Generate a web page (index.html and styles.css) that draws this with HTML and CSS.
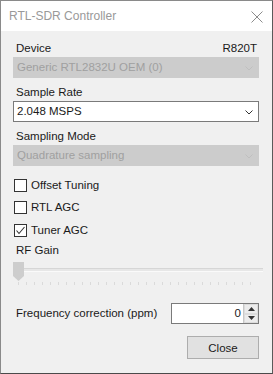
FILE: index.html
```html
<!DOCTYPE html>
<html lang="en">
<head>
    <meta charset="UTF-8">
    <title>RTL-SDR Controller</title>
    <link rel="stylesheet" href="styles.css">
</head>
<body>
    <div class="window">
        <div class="titlebar">
            <span class="title">RTL-SDR Controller</span>
            <svg class="close-x" width="12" height="12" viewBox="0 0 12 12">
                <path d="M0.5 0.5 L11.5 11.5 M11.5 0.5 L0.5 11.5" stroke="#8c8c8c" stroke-width="1" fill="none"/>
            </svg>
        </div>

        <div class="client">
            <div class="label-row first">
                <span>Device</span>
                <span>R820T</span>
            </div>
            <div class="combo disabled">
                <span>Generic RTL2832U OEM (0)</span>
                <svg class="arrow" width="8" height="5" viewBox="0 0 8 5"><path d="M0.5 0.5 L4 4 L7.5 0.5" stroke="#bfbfbf" fill="none"/></svg>
            </div>

            <div class="label-row">
                <span>Sample Rate</span>
            </div>
            <div class="combo">
                <span>2.048 MSPS</span>
                <svg class="arrow" width="8" height="5" viewBox="0 0 8 5"><path d="M0.5 0.5 L4 4 L7.5 0.5" stroke="#333" fill="none"/></svg>
            </div>

            <div class="label-row">
                <span>Sampling Mode</span>
            </div>
            <div class="combo disabled">
                <span>Quadrature sampling</span>
                <svg class="arrow" width="8" height="5" viewBox="0 0 8 5"><path d="M0.5 0.5 L4 4 L7.5 0.5" stroke="#bfbfbf" fill="none"/></svg>
            </div>

            <div class="checks">
                <div class="check"><span class="box"></span>Offset Tuning</div>
                <div class="check"><span class="box"></span>RTL AGC</div>
                <div class="check last">
                    <span class="box">
                        <svg width="11" height="11" viewBox="0 0 11 11"><path d="M1.5 5.5 L4 8.5 L9.5 2" stroke="#333" stroke-width="1.1" fill="none"/></svg>
                    </span>Tuner AGC
                </div>
            </div>

            <div class="label-row gain-label">
                <span>RF Gain</span>
            </div>
            <div class="slider">
                <div class="track"></div>
                <svg class="thumb" width="11" height="19" viewBox="0 0 11 19">
                    <path d="M0 0 H11 V14 L5.5 19 L0 14 Z" fill="#cdcdcd"/>
                </svg>
                <div class="ticks"></div>
            </div>

            <div class="freq-row">
                <span>Frequency correction (ppm)</span>
                <div class="spinner">
                    <span class="value">0</span>
                    <div class="spin-buttons">
                        <div class="spin-btn"><svg width="7" height="4" viewBox="0 0 7 4"><path d="M3.5 0 L7 4 H0 Z" fill="#333"/></svg></div>
                        <div class="spin-btn"><svg width="7" height="4" viewBox="0 0 7 4"><path d="M0 0 H7 L3.5 4 Z" fill="#333"/></svg></div>
                    </div>
                </div>
            </div>

            <div class="button-row">
                <button class="close-btn">Close</button>
            </div>
        </div>
    </div>
</body>
</html>
```

FILE: styles.css
```css
html, body {
    margin: 0;
    padding: 0;
    background-color: #3a3a3a;
}
body {
    font-family: "Liberation Sans", Arial, sans-serif;
    font-size: 11.5px;
    line-height: 13px;
    color: #1a1a1a;
}
.window {
    width: 271px;
    height: 372px;
    border: 1px solid #8a8a8a;
    border-right-color: #5a5a5a;
    border-bottom-color: #4a4a4a;
    background-color: #f0f0f0;
    display: flex;
    flex-direction: column;
}
.titlebar {
    height: 30px;
    background-color: #fff;
    display: flex;
    align-items: center;
    justify-content: space-between;
    padding: 0 9px 0 8px;
}
.title {
    font-size: 12px;
    color: #999;
}
.close-x {
    margin-top: 1px;
}
.client {
    display: flex;
    flex-direction: column;
    padding: 0 13px 0 12px;
}
.label-row {
    display: flex;
    justify-content: space-between;
    height: 15px;
    padding: 7px 2px 1px 3px;
    align-items: center;
}
.label-row.first {
    padding-top: 10px;
}
.combo {
    height: 19px;
    border: 1px solid #7a7a7a;
    background-color: #fff;
    display: flex;
    align-items: center;
    justify-content: space-between;
    padding: 0 5px 0 3px;
}
.combo.disabled {
    background-color: #cccccc;
    border-color: #cccccc;
    color: #a0a0a0;
}
.arrow {
    margin-top: 1px;
}
.checks {
    display: flex;
    flex-direction: column;
    gap: 9px;
    padding-top: 13px;
}
.check {
    display: flex;
    align-items: center;
    height: 13px;
    gap: 4px;
    padding-left: 1px;
}
.check.last {
    margin-top: 1px;
}
.box {
    width: 11px;
    height: 11px;
    border: 1px solid #333;
    background-color: #fff;
    display: flex;
    align-items: center;
    justify-content: center;
}
.gain-label {
    padding-top: 6px;
}
.slider {
    position: relative;
    height: 24px;
    margin-top: 3px;
    margin-right: -4px;
}
.track {
    position: absolute;
    left: 0;
    right: 0;
    top: 6px;
    height: 2px;
    background-color: #e7e7e7;
    border-top: 1px solid #d6d6d6;
    border-bottom: 1px solid #fafafa;
}
.thumb {
    position: absolute;
    left: 0;
    top: 0;
}
.ticks {
    position: absolute;
    left: 5px;
    right: 5px;
    top: 20px;
    height: 3px;
    background-image: repeating-linear-gradient(to right, #dadada 0, #dadada 1px, transparent 1px, transparent 8px);
}
.freq-row {
    display: flex;
    justify-content: space-between;
    align-items: center;
    margin-top: 17px;
    padding-left: 3px;
}
.spinner {
    width: 86px;
    height: 19px;
    border: 1px solid #7a7a7a;
    background-color: #fff;
    display: flex;
    justify-content: flex-end;
    align-items: center;
}
.value {
    padding-right: 2px;
}
.spin-buttons {
    display: flex;
    flex-direction: column;
    width: 14px;
    height: 19px;
    border-left: 1px solid #c8c8c8;
}
.spin-btn {
    flex: 1;
    display: flex;
    align-items: center;
    justify-content: center;
    background-color: #ececec;
    border: 1px solid #dcdcdc;
}
.button-row {
    display: flex;
    justify-content: flex-end;
    margin-top: 12px;
}
.close-btn {
    width: 72px;
    height: 23px;
    font-family: "Liberation Sans", Arial, sans-serif;
    font-size: 11.5px;
    color: #1a1a1a;
    background-color: #e1e1e1;
    border: 1px solid #adadad;
    padding: 0;
}
```
